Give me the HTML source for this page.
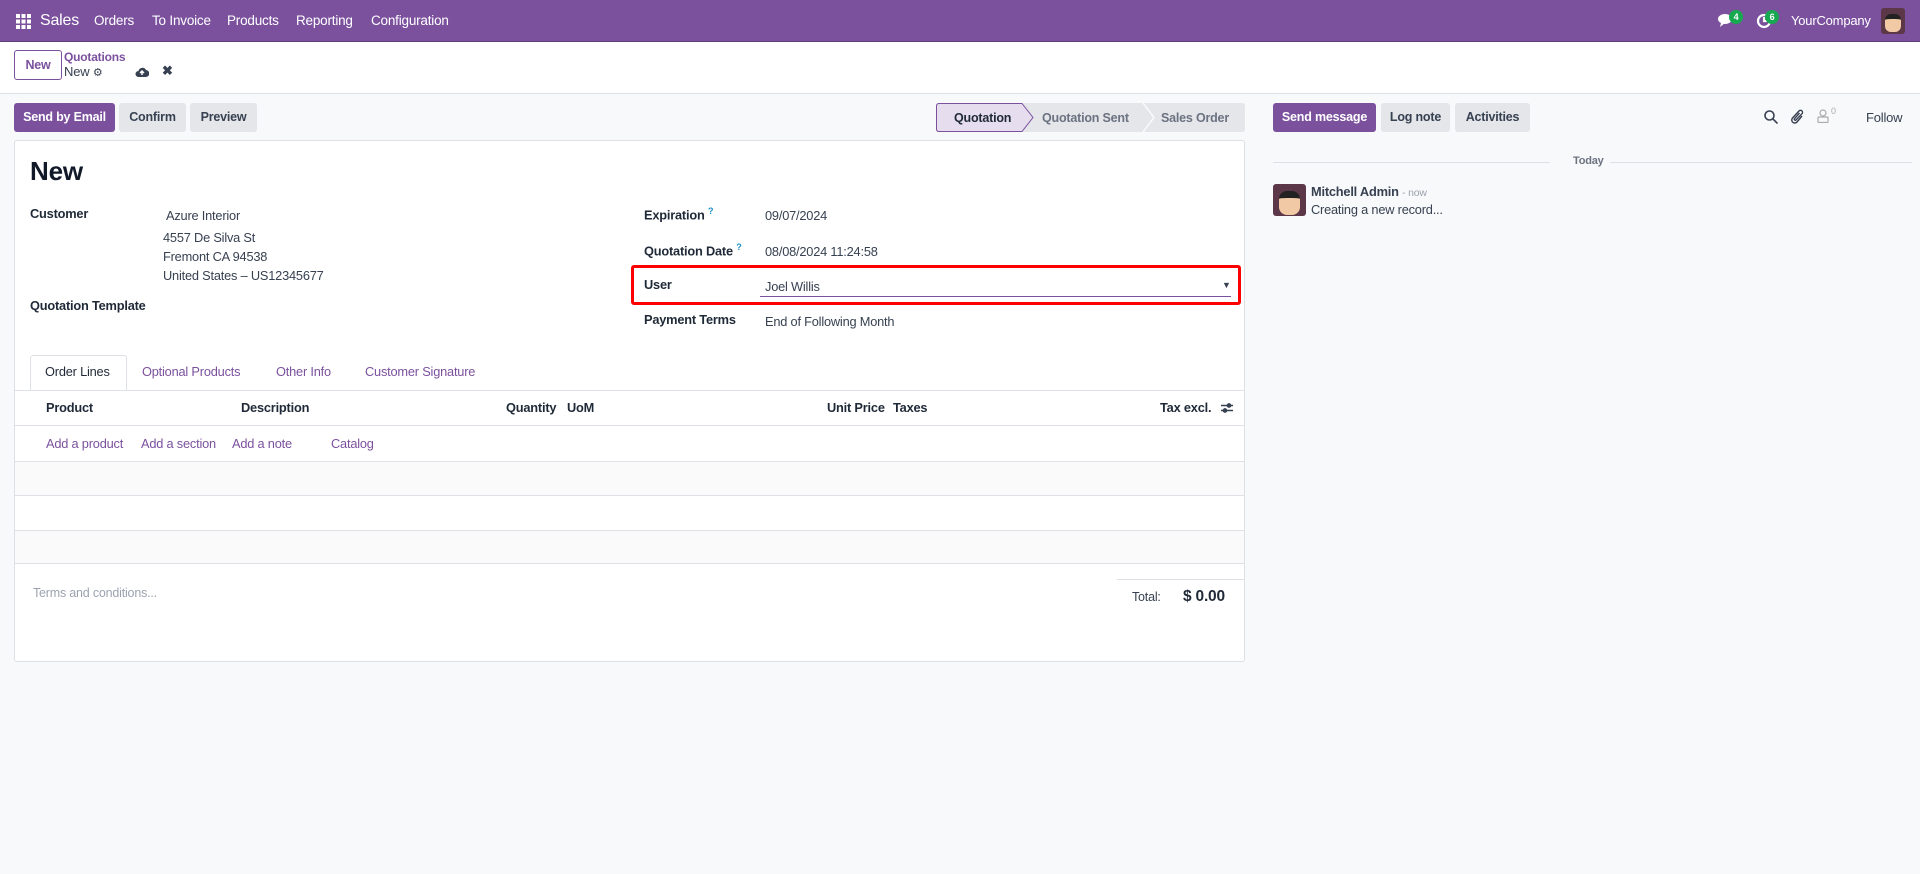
<!DOCTYPE html>
<html><head><meta charset="utf-8"><style>
*{box-sizing:border-box;margin:0;padding:0}
body{width:1920px;height:874px;background:#f8f9fa;font-family:"Liberation Sans",sans-serif;color:#374151;font-size:13px;position:relative;overflow:hidden;letter-spacing:-0.2px}
.a{position:absolute;white-space:nowrap}
.nav{position:absolute;left:0;top:0;width:1920px;height:42px;background:#7b519e;border-bottom:1px solid #5e3d7c;color:#fff}
.nav .a{color:#fff;font-size:13.5px;top:13px}
.cp{position:absolute;left:0;top:42px;width:1920px;height:52px;background:#fff;border-bottom:1px solid #dee2e6}
.btn{position:absolute;top:103px;height:29px;border-radius:3px;font-weight:bold;font-size:12.5px;line-height:29px;text-align:center;background:#e4e6ea;color:#374151}
.btn.p{background:#7b519e;color:#fff}
.sheet{position:absolute;left:14px;top:140px;width:1231px;height:522px;background:#fff;border:1px solid #dde0e4;border-radius:3px}
.lbl{font-weight:bold;color:#1f2937;font-size:12.8px}
.v{color:#374151;font-size:12.8px}
.lnk{color:#7b519e;font-size:12.8px}
.th{font-weight:bold;color:#1f2937;font-size:12.8px}
.hl{position:absolute;height:1px;background:#dee2e6}
sup{color:#1a8fc9;font-size:9px}
</style></head><body>
<div class="nav">
  <svg class="a" style="left:16px;top:14px" width="15" height="15" viewBox="0 0 15 15" fill="#fff"><rect x="0" y="0" width="4" height="4"/><rect x="5.5" y="0" width="4" height="4"/><rect x="11" y="0" width="4" height="4"/><rect x="0" y="5.5" width="4" height="4"/><rect x="5.5" y="5.5" width="4" height="4"/><rect x="11" y="5.5" width="4" height="4"/><rect x="0" y="11" width="4" height="4"/><rect x="5.5" y="11" width="4" height="4"/><rect x="11" y="11" width="4" height="4"/></svg>
  <span class="a" style="left:40px;top:12px;font-size:16px">Sales</span>
  <span class="a" style="left:94px">Orders</span>
  <span class="a" style="left:152px">To Invoice</span>
  <span class="a" style="left:227px">Products</span>
  <span class="a" style="left:296px">Reporting</span>
  <span class="a" style="left:371px">Configuration</span>
  <svg class="a" style="left:1718px;top:13px" width="16" height="15" viewBox="0 0 16 15" fill="#fff"><ellipse cx="7" cy="6" rx="7" ry="5"/><path d="M3 10 L2 14 L7 10Z"/></svg>
  <span class="a" style="left:1729px;top:10px;width:14px;height:14px;border-radius:7px;background:#17a94f;font-size:9px;text-align:center;line-height:14px;font-weight:bold">4</span>
  <svg class="a" style="left:1756px;top:13px" width="16" height="16" viewBox="0 0 16 16" fill="none" stroke="#fff" stroke-width="2.2"><circle cx="8" cy="8" r="6"/><path d="M8 4v4h3"/></svg>
  <span class="a" style="left:1765px;top:10px;width:14px;height:14px;border-radius:7px;background:#17a94f;font-size:9px;text-align:center;line-height:14px;font-weight:bold">6</span>
  <span class="a" style="left:1791px;top:13px;font-size:13px">YourCompany</span>
  <div class="a" style="left:1881px;top:8px;width:24px;height:26px;background:#5c3748;border-radius:3px;overflow:hidden"><div style="margin:6px 4px;width:16px;height:18px;background:#f1c9a5;border-radius:6px;border-top:5px solid #222"></div></div>
</div>
<div class="cp">
  <div class="a" style="left:14px;top:8px;width:48px;height:30px;border:1px solid #7b519e;border-radius:3px;color:#7b519e;font-weight:bold;font-size:12.5px;text-align:center;line-height:28px">New</div>
  <span class="a lnk" style="left:64px;top:8px;font-size:12px;font-weight:bold">Quotations</span>
  <span class="a" style="left:64px;top:22px;font-size:13px;color:#374151">New <span style="font-size:11px">⚙</span></span>
  <svg class="a" style="left:135px;top:24px" width="14" height="12" viewBox="0 0 14 12"><path d="M3.5 11a3 3 0 010-6 4 4 0 017.5-1 3.3 3.3 0 01-.5 7z" fill="#374151"/><path d="M7 9V5M5 7l2-2 2 2" stroke="#fff" stroke-width="1.5" fill="none"/></svg>
  <span class="a" style="left:162px;top:21px;font-size:13px;font-weight:bold;color:#374151">✖</span>
</div>
<div class="btn p" style="left:14px;width:101px">Send by Email</div>
<div class="btn" style="left:119px;width:67px">Confirm</div>
<div class="btn" style="left:190px;width:67px">Preview</div>
<svg class="a" style="left:936px;top:103px" width="310" height="29" viewBox="0 0 310 29">
  <rect x="0" y="0" width="309" height="29" rx="3" fill="#e4e6ea"/>
  <path d="M3 0.5H86L97 14.5L86 28.5H3Q0.5 28.5 0.5 26V3Q0.5 0.5 3 0.5Z" fill="#e6ddee" stroke="#7b519e"/>
  <path d="M207 0L218 14.5L207 29" stroke="#fff" stroke-width="1.2" fill="none"/>
  <text x="18" y="19" font-family="Liberation Sans" font-size="12.5" font-weight="bold" fill="#1f2937">Quotation</text>
  <text x="106" y="19" font-family="Liberation Sans" font-size="12.5" font-weight="bold" fill="#6b7280">Quotation Sent</text>
  <text x="225" y="19" font-family="Liberation Sans" font-size="12.5" font-weight="bold" fill="#6b7280">Sales Order</text>
</svg>
<div class="sheet"></div>
<span class="a" style="left:30px;top:156px;font-size:26px;font-weight:bold;color:#111827">New</span>
<span class="a lbl" style="left:30px;top:206px">Customer</span>
<span class="a v" style="left:166px;top:208px">Azure Interior</span>
<span class="a v" style="left:163px;top:230px">4557 De Silva St</span>
<span class="a v" style="left:163px;top:249px">Fremont CA 94538</span>
<span class="a v" style="left:163px;top:268px">United States – US12345677</span>
<span class="a lbl" style="left:30px;top:298px">Quotation Template</span>
<span class="a lbl" style="left:644px;top:206px">Expiration <sup>?</sup></span>
<span class="a v" style="left:765px;top:208px">09/07/2024</span>
<span class="a lbl" style="left:644px;top:242px">Quotation Date <sup>?</sup></span>
<span class="a v" style="left:765px;top:244px">08/08/2024 11:24:58</span>
<div class="a" style="left:631px;top:265px;width:610px;height:40px;border:3px solid #f00;border-radius:3px"></div>
<span class="a lbl" style="left:644px;top:277px">User</span>
<span class="a v" style="left:765px;top:279px">Joel Willis</span>
<div class="hl" style="left:760px;top:296px;width:471px;background:#7b519e"></div>
<span class="a" style="left:1222px;top:280px;font-size:9px;color:#374151">▼</span>
<span class="a lbl" style="left:644px;top:312px">Payment Terms</span>
<span class="a v" style="left:765px;top:314px">End of Following Month</span>
<div class="a" style="left:30px;top:355px;width:97px;height:36px;border:1px solid #dee2e6;border-bottom:none;background:#fff;border-radius:3px 3px 0 0"></div>
<span class="a" style="left:45px;top:364px;font-size:12.8px;color:#1f2937">Order Lines</span>
<span class="a lnk" style="left:142px;top:364px">Optional Products</span>
<span class="a lnk" style="left:276px;top:364px">Other Info</span>
<span class="a lnk" style="left:365px;top:364px">Customer Signature</span>
<div class="hl" style="left:15px;top:390px;width:1229px"></div>
<span class="a th" style="left:46px;top:400px">Product</span>
<span class="a th" style="left:241px;top:400px">Description</span>
<span class="a th" style="left:506px;top:400px">Quantity</span>
<span class="a th" style="left:567px;top:400px">UoM</span>
<span class="a th" style="left:827px;top:400px">Unit Price</span>
<span class="a th" style="left:893px;top:400px">Taxes</span>
<span class="a th" style="left:1160px;top:400px">Tax excl.</span>
<svg class="a" style="left:1221px;top:402px" width="12" height="12" viewBox="0 0 12 12" stroke="#374151" stroke-width="1.5" fill="#374151"><path d="M0 3.5H12M0 8.5H12"/><circle cx="8" cy="3.5" r="1.6"/><circle cx="4" cy="8.5" r="1.6"/></svg>
<div class="hl" style="left:15px;top:425px;width:1229px"></div>
<span class="a lnk" style="left:46px;top:436px">Add a product</span>
<span class="a lnk" style="left:141px;top:436px">Add a section</span>
<span class="a lnk" style="left:232px;top:436px">Add a note</span>
<span class="a lnk" style="left:331px;top:436px">Catalog</span>
<div class="a" style="left:15px;top:461px;width:1229px;height:34px;background:#fafafb;border-top:1px solid #dee2e6"></div>
<div class="a" style="left:15px;top:495px;width:1229px;height:35px;background:#fff;border-top:1px solid #dee2e6"></div>
<div class="a" style="left:15px;top:530px;width:1229px;height:34px;background:#fafafb;border-top:1px solid #dee2e6;border-bottom:1px solid #dee2e6"></div>
<div class="hl" style="left:1117px;top:579px;width:127px"></div>
<span class="a" style="left:33px;top:586px;font-size:12.5px;color:#9ca3af">Terms and conditions...</span>
<span class="a" style="left:1132px;top:590px;font-size:12.5px;color:#374151">Total:</span>
<span class="a" style="left:1183px;top:588px;font-size:15.5px;font-weight:bold;color:#1f2937">$ 0.00</span>
<div class="btn p" style="left:1273px;width:103px">Send message</div>
<div class="btn" style="left:1381px;width:69px">Log note</div>
<div class="btn" style="left:1455px;width:75px">Activities</div>
<svg class="a" style="left:1764px;top:110px" width="14" height="14" viewBox="0 0 14 14" fill="none" stroke="#374151" stroke-width="1.6"><circle cx="5.5" cy="5.5" r="4.5"/><path d="M9 9l4.5 4.5"/></svg>
<svg class="a" style="left:1791px;top:108px" width="14" height="17" viewBox="0 0 14 17" fill="none" stroke="#374151" stroke-width="1.4"><path d="M11 8L6 14a3 3 0 01-4.5-4L8 3a2 2 0 013 2.7L5 12a1 1 0 01-1.5-1.3L8.5 5"/></svg>
<svg class="a" style="left:1817px;top:109px" width="12" height="14" viewBox="0 0 12 14" fill="none" stroke="#aaa" stroke-width="1.2"><circle cx="6" cy="4" r="3"/><rect x="1" y="8" width="10" height="5.5" rx="1"/></svg>
<span class="a" style="left:1831px;top:106px;font-size:9px;color:#aaa">0</span>
<span class="a" style="left:1866px;top:110px;font-size:13px;color:#374151">Follow</span>
<div class="hl" style="left:1273px;top:162px;width:277px"></div>
<span class="a" style="left:1573px;top:155px;font-size:11px;color:#6b7280;font-weight:bold">Today</span>
<div class="hl" style="left:1610px;top:162px;width:302px"></div>
<div class="a" style="left:1273px;top:184px;width:33px;height:32px;background:#5c3748;border-radius:3px;overflow:hidden"><div style="margin:7px 6px;width:21px;height:24px;background:#f1c9a5;border-radius:8px;border-top:7px solid #222"></div></div>
<span class="a" style="left:1311px;top:184px;font-size:12.8px;font-weight:bold;color:#374151">Mitchell Admin <span style="font-weight:normal;font-size:10.5px;color:#9ca3af">- now</span></span>
<span class="a" style="left:1311px;top:202px;font-size:12.8px;color:#374151">Creating a new record...</span>
</body></html>
